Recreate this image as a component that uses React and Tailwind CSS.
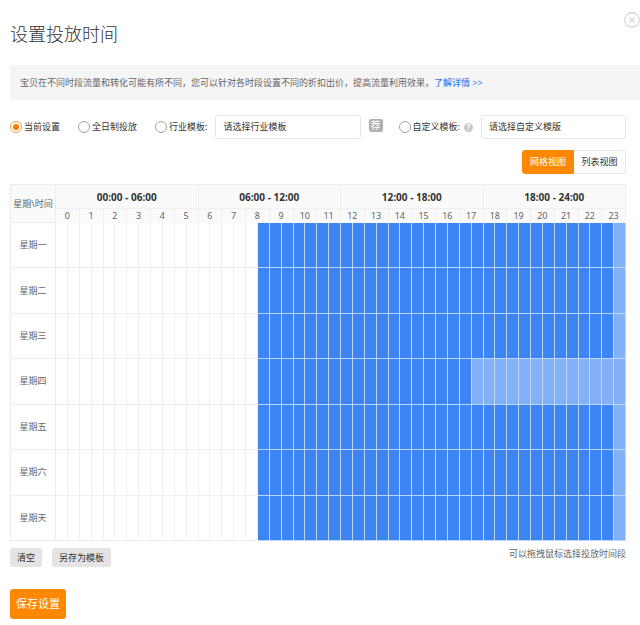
import React, { useState } from "react";

const DAYS = ["星期一", "星期二", "星期三", "星期四", "星期五", "星期六", "星期天"];
const PERIODS = ["00:00 - 06:00", "06:00 - 12:00", "12:00 - 18:00", "18:00 - 24:00"];
const HOURS = Array.from({ length: 24 }, (_, i) => i);
const SLOTS = Array.from({ length: 48 }, (_, i) => i);

// 0 = off, 1 = discounted, 2 = full price. One value per half hour.
const initialSchedule = DAYS.map((_, day) => {
  const fullUntil = day === 3 ? 35 : 47;
  return SLOTS.map((slot) => (slot < 17 ? 0 : slot < fullUntil ? 2 : 1));
});

const slotStyles = [
  "border-[#efefef] bg-white",
  "border-[#bcd7fc] bg-[#84b0f8]",
  "border-[#bcd7fc] bg-[#3d84f5]",
];

const Radio = ({ id, value, mode, setMode, children }) => (
  <div className="flex items-center gap-0.5">
    <input
      type="radio"
      id={id}
      name="mode"
      checked={mode === value}
      onChange={() => setMode(value)}
      className="grid size-3 shrink-0 appearance-none place-items-center rounded-full border border-[#a3a3a3] bg-white before:size-1.5 before:rounded-full checked:border-[#f79a3e] checked:before:bg-[#f57c00]"
    />
    <label htmlFor={id} className="whitespace-nowrap text-[#333]">
      {children}
    </label>
  </div>
);

const TemplateSelect = ({ label, placeholder }) => (
  <select
    aria-label={label}
    className="h-6 min-w-0 flex-1 appearance-none rounded-[3px] border border-[#e4e4e4] bg-white px-[7px] text-[9px] text-[#333]"
  >
    <option>{placeholder}</option>
  </select>
);

const App = () => {
  const [mode, setMode] = useState("current");
  const [view, setView] = useState("grid");
  const [schedule, setSchedule] = useState(initialSchedule);

  const toggleSlot = (day, slot) => {
    setSchedule(
      schedule.map((row, d) =>
        d === day ? row.map((v, s) => (s === slot ? (v ? 0 : 2) : v)) : row
      )
    );
  };

  const clearAll = () => setSchedule(DAYS.map(() => SLOTS.map(() => 0)));

  return (
    <div className="bg-white pb-2 pl-[10px] font-['Noto_Sans','Noto_Sans_CJK_SC',sans-serif] text-[9px] leading-3 text-[#666]">
      <header className="flex items-start justify-between pt-3">
        <h1 className="pt-2 text-[18px] leading-7 font-light text-[#333]">设置投放时间</h1>
        <button type="button" aria-label="关闭" className="text-[#d2d2d2]">
          <svg className="size-4" viewBox="0 0 16 16" fill="none" stroke="currentColor">
            <circle cx="8" cy="8" r="7.4" strokeWidth="1.1" />
            <path d="M5.4 5.4l5.2 5.2M10.6 5.4l-5.2 5.2" strokeWidth="1.3" />
          </svg>
        </button>
      </header>

      <p className="mt-[17px] bg-[#f5f5f5] px-[10px] py-3 leading-[11px]">
        宝贝在不同时段流量和转化可能有所不同，您可以针对各时段设置不同的折扣出价，提高流量利用效果，
        <a href="#detail" className="font-medium text-[#3a83f0]">
          了解详情 &gt;&gt;
        </a>
      </p>

      <main className="pr-[14px]">
        <div className="mt-[15px] flex items-center">
          <Radio id="mode-current" value="current" mode={mode} setMode={setMode}>
            当前设置
          </Radio>
          <div className="ml-[18px]">
            <Radio id="mode-all" value="all" mode={mode} setMode={setMode}>
              全日制投放
            </Radio>
          </div>
          <div className="mr-2 ml-[18px]">
            <Radio id="mode-industry" value="industry" mode={mode} setMode={setMode}>
              行业模板:
            </Radio>
          </div>
          <TemplateSelect label="行业模板" placeholder="请选择行业模板" />
          <span className="mr-4 mb-1 ml-2 flex h-[13px] w-[14px] items-center justify-center rounded-[2px] bg-[#b0b0b0] text-[10px] text-white">
            荐
          </span>
          <Radio id="mode-custom" value="custom" mode={mode} setMode={setMode}>
            自定义模板:
          </Radio>
          <span className="mr-2 ml-1 flex size-[9px] items-center justify-center rounded-full bg-[#c8c8c8] text-[8px] font-bold text-white">
            ?
          </span>
          <TemplateSelect label="自定义模板" placeholder="请选择自定义模版" />
        </div>

        <div className="mt-[11px] flex justify-end">
          <button
            type="button"
            onClick={() => setView("grid")}
            className={`h-6 w-[52px] rounded-l-[3px] border ${
              view === "grid" ? "border-[#ff8800] bg-[#ff8800] text-white" : "border-[#e8e8e8] text-[#333]"
            }`}
          >
            网格视图
          </button>
          <button
            type="button"
            onClick={() => setView("list")}
            className={`h-6 w-[52px] rounded-r-[3px] border ${
              view === "list"
                ? "border-[#ff8800] bg-[#ff8800] text-white"
                : "border-l-0 border-[#e8e8e8] text-[#333]"
            }`}
          >
            列表视图
          </button>
        </div>

        {/* rows share out the table's height */}
        <table className="mt-[10px] h-[357px] w-full table-fixed border-separate border-spacing-0 border-t border-l border-[#ececec] text-center">
          <colgroup>
            <col className="w-[45px]" />
            {SLOTS.map((slot) => (
              <col key={slot} />
            ))}
          </colgroup>
          <thead className="bg-[#fafafa]">
            <tr className="h-6">
              <th rowSpan={2} className="border-r border-b border-[#ececec] p-0 font-normal whitespace-nowrap">
                星期\时间
              </th>
              {PERIODS.map((period) => (
                <th
                  key={period}
                  colSpan={12}
                  className="border-r border-b border-[#f0f0f0] p-0 text-[10px] font-bold text-[#333]"
                >
                  {period}
                </th>
              ))}
            </tr>
            <tr className="h-[14px]">
              {HOURS.map((hour) => (
                <th key={hour} colSpan={2} className="border-r border-[#f0f0f0] p-0 font-normal">
                  {hour}
                </th>
              ))}
            </tr>
          </thead>
          <tbody>
            {DAYS.map((day, d) => (
              <tr key={day} className="h-[45px]">
                <th className="border-r border-b border-[#ececec] p-0 font-normal">{day}</th>
                {SLOTS.map((slot) => (
                  <td
                    key={slot}
                    onClick={() => toggleSlot(d, slot)}
                    className={`cursor-pointer border-r border-b p-0 ${slotStyles[schedule[d][slot]]}`}
                  />
                ))}
              </tr>
            ))}
          </tbody>
        </table>

        <div className="mt-[7px] flex items-start">
          <button
            type="button"
            onClick={clearAll}
            className="mr-[10px] h-[19px] rounded-[3px] bg-[#e4e4e4] px-[7px] text-[#333]"
          >
            清空
          </button>
          <button type="button" className="h-[19px] rounded-[3px] bg-[#e4e4e4] px-[7px] text-[#333]">
            另存为模板
          </button>
          <span className="ml-auto">可以拖拽鼠标选择投放时间段</span>
        </div>

        <button
          type="button"
          className="mt-[22px] h-[30px] w-14 rounded-[3px] bg-[#ff8800] text-[11px] text-white"
        >
          保存设置
        </button>
      </main>
    </div>
  );
};

export default App;
